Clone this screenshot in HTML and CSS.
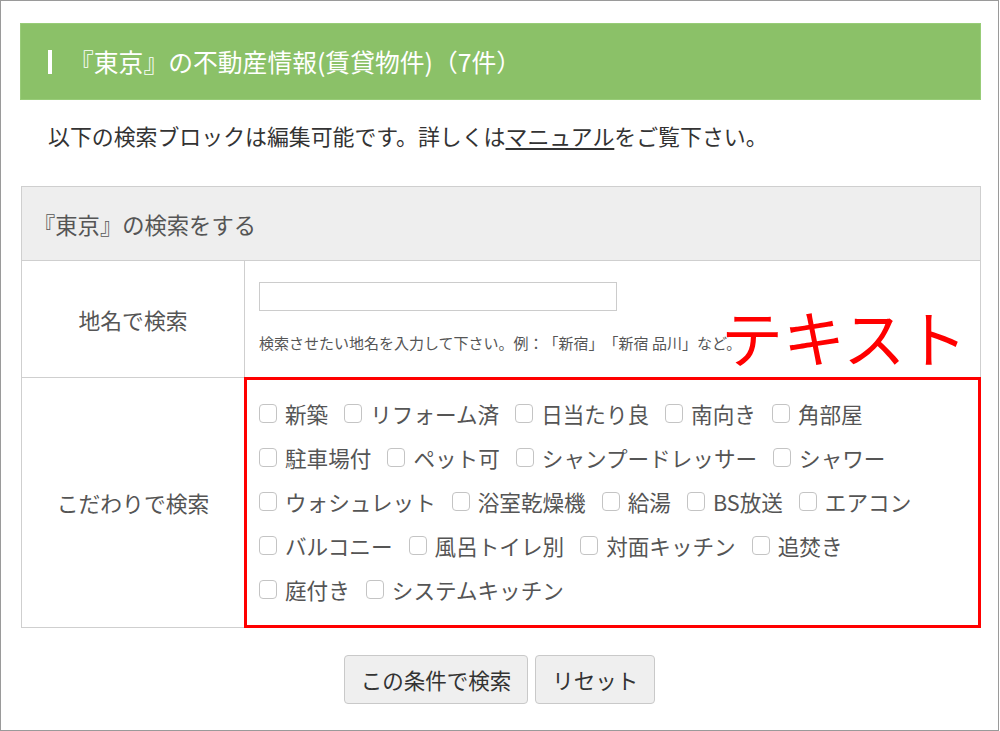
FILE: index.html
```html
<!DOCTYPE html>
<html lang="ja">
<head>
<meta charset="utf-8">
<title>『東京』の不動産情報</title>
<link rel="stylesheet" href="styles.css">
</head>
<body>
<div class="frame">
  <h2 class="title"><span class="title-bar"></span><span class="title-text">『東京』の不動産情報(賃貸物件)（7件）</span></h2>
  <p class="lead">以下の検索ブロックは編集可能です。詳しくは<a class="lead-link" href="#">マニュアル</a>をご覧下さい。</p>

  <div class="search">
    <div class="search-head">『東京』の検索をする</div>
    <div class="row">
      <div class="label">地名で検索</div>
      <div class="field field-place">
        <input class="text-input" type="text">
        <p class="help">検索させたい地名を入力して下さい。例：「新宿」「新宿 品川」など。</p>
      </div>
    </div>
    <div class="row">
      <div class="label">こだわりで検索</div>
      <div class="field checks">
        <label class="check"><span class="box"></span>新築</label>
        <label class="check"><span class="box"></span>リフォーム済</label>
        <label class="check"><span class="box"></span>日当たり良</label>
        <label class="check"><span class="box"></span>南向き</label>
        <label class="check"><span class="box"></span>角部屋</label>
        <label class="check"><span class="box"></span>駐車場付</label>
        <label class="check"><span class="box"></span>ペット可</label>
        <label class="check"><span class="box"></span>シャンプードレッサー</label>
        <label class="check"><span class="box"></span>シャワー</label>
        <label class="check"><span class="box"></span>ウォシュレット</label>
        <label class="check"><span class="box"></span>浴室乾燥機</label>
        <label class="check"><span class="box"></span>給湯</label>
        <label class="check"><span class="box"></span>BS放送</label>
        <label class="check"><span class="box"></span>エアコン</label>
        <label class="check"><span class="box"></span>バルコニー</label>
        <label class="check"><span class="box"></span>風呂トイレ別</label>
        <label class="check"><span class="box"></span>対面キッチン</label>
        <label class="check"><span class="box"></span>追焚き</label>
        <label class="check"><span class="box"></span>庭付き</label>
        <label class="check"><span class="box"></span>システムキッチン</label>
      </div>
    </div>
  </div>

  <div class="buttons">
    <button class="btn" type="button">この条件で検索</button>
    <button class="btn" type="button">リセット</button>
  </div>

  <div class="note">テキスト</div>
</div>
</body>
</html>
```

FILE: styles.css
```css
* { box-sizing: border-box; }

html, body {
  margin: 0;
  padding: 0;
  background: #fff;
}

body {
  font-family: "Noto Sans CJK JP", "Noto Sans", sans-serif;
  color: #333;
  text-spacing-trim: space-all;
}

.frame {
  position: relative;
  width: 999px;
  height: 731px;
  border: 1px solid #9a9a9a;
  overflow: hidden;
}

.title {
  display: flex;
  align-items: center;
  margin: 22px 0 0 19px;
  width: 961px;
  height: 77px;
  padding-left: 27px;
  background: #8bc168;
  border: 1px solid #98cc78;
  color: #fff;
  font-size: 24.8px;
  font-weight: normal;
}

.title-bar {
  width: 4px;
  height: 24px;
  background: #fff;
  margin-right: 17px;
}

.title-text {
  line-height: 1;
}

.lead {
  margin: 20px 0 0 47px;
  height: 32px;
  line-height: 32px;
  font-size: 21.9px;
  color: #333;
}

.lead-link {
  color: #333;
  text-decoration: underline;
  text-underline-offset: 3px;
}

.search {
  margin: 34px 0 0 20px;
  width: 960px;
  border: 1px solid #cfcfcf;
}

.search-head {
  height: 73px;
  display: flex;
  align-items: center;
  padding-left: 11px;
  background: #eeeeee;
  color: #555;
  font-size: 22.3px;
}

.row {
  display: grid;
  grid-template-columns: 223px 1fr;
  border-top: 1px solid #cfcfcf;
}

.label {
  display: flex;
  align-items: center;
  justify-content: center;
  border-right: 1px solid #cfcfcf;
  color: #555;
  font-size: 21.8px;
}

.field-place {
  padding: 21px 14px 24px;
}

.text-input {
  display: block;
  width: 358px;
  height: 29px;
  margin: 0;
  border: 1px solid #cccccc;
  border-radius: 0;
  background: #fff;
  padding: 0 6px;
}

.help {
  margin: 22px 0 0;
  height: 20px;
  line-height: 20px;
  font-size: 15px;
  color: #555;
}

.checks {
  position: relative;
  display: flex;
  flex-wrap: wrap;
  padding: 13px 20px 16px 14px;
}

.checks::after {
  content: "";
  position: absolute;
  top: -1px;
  left: -1px;
  right: -1px;
  bottom: -1px;
  border: 3px solid #ff0000;
  pointer-events: none;
}

.check {
  display: inline-flex;
  align-items: center;
  height: 44px;
  margin-right: 16px;
  font-size: 21.6px;
  color: #555;
  white-space: nowrap;
}

.box {
  width: 18px;
  height: 19px;
  margin-right: 8px;
  border: 1px solid #c4c4c4;
  border-radius: 4px;
  background: #fff;
}

.buttons {
  display: flex;
  justify-content: center;
  gap: 7px;
  margin-top: 27px;
}

.btn {
  height: 49px;
  padding: 0 16px;
  margin: 0;
  border: 1px solid #c9c9c9;
  border-radius: 4px;
  background: #efefef;
  color: #333;
  font-family: "Noto Sans CJK JP", "Noto Sans", sans-serif;
  font-size: 21.5px;
}

.note {
  position: absolute;
  left: 720px;
  top: 304px;
  font-size: 62px;
  line-height: 62px;
  color: #ff0000;
  white-space: nowrap;
}
```
